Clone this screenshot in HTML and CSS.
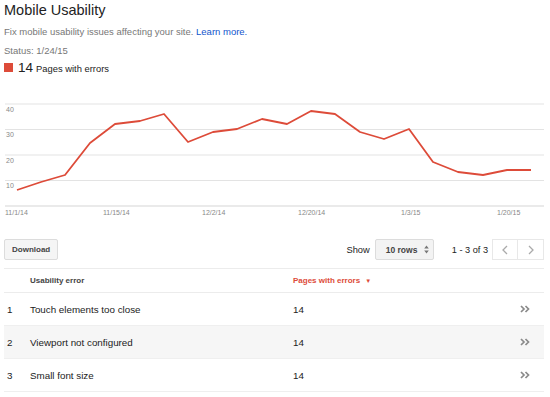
FILE: index.html
```html
<!DOCTYPE html>
<html lang="en">
<head>
<meta charset="UTF-8">
<title>Mobile Usability</title>
<link rel="stylesheet" href="styles.css">
</head>
<body>
    <div class="page">
        <h1 class="title">Mobile Usability</h1>
        <p class="desc">Fix mobile usability issues affecting your site. <a href="#">Learn more.</a></p>
        <p class="status">Status: 1/24/15</p>

        <div class="summary">
            <span class="swatch"></span>
            <span class="count">14</span>
            <span class="count-label">Pages with errors</span>
        </div>

        <!-- chart uses page coordinates through the viewBox -->
        <svg class="chart" width="541" height="122" viewBox="4 96 541 122">
            <g stroke="#e3e3e3" stroke-width="1.2">
                <line x1="5" y1="103" x2="544" y2="103"/>
                <line x1="5" y1="128.5" x2="544" y2="128.5"/>
                <line x1="5" y1="154" x2="544" y2="154"/>
                <line x1="5" y1="179.5" x2="544" y2="179.5"/>
            </g>
            <line x1="5" y1="205" x2="544" y2="205" stroke="#d6d6d6" stroke-width="1.2"/>
            <g class="axis">
                <text x="6" y="111">40</text>
                <text x="6" y="136">30</text>
                <text x="6" y="162">20</text>
                <text x="6" y="187">10</text>
                <text x="5" y="214">11/1/14</text>
                <text x="103" y="214">11/15/14</text>
                <text x="202" y="214">12/2/14</text>
                <text x="298" y="214">12/20/14</text>
                <text x="401" y="214">1/3/15</text>
                <text x="497" y="214">1/20/15</text>
            </g>
            <polyline fill="none" stroke="#dd4b39" stroke-width="1.8" stroke-linejoin="round"
                points="17,189 41,181 65,174 90,142 115,123 140,120 164,113 188,141 213,131 237,128 262,118 287,123 311,110 335,113 360,131 384,138 409,128 433,161 458,171 483,174 507,169 531,169"/>
        </svg>

        <div class="toolbar">
            <button type="button" class="btn">Download</button>
            <div class="pager">
                <span class="show">Show</span>
                <div class="select">
                    <span>10 rows</span>
                    <svg width="5" height="9" viewBox="0 0 5 9"><path d="M2.5 0.5 L4.8 3.5 H0.2 Z M2.5 8.5 L4.8 5.5 H0.2 Z" fill="#777"/></svg>
                </div>
                <span class="range">1 - 3 of 3</span>
                <div class="nav">
                    <button type="button" class="nav-btn"><svg width="6" height="10" viewBox="0 0 6 10"><polyline points="5,1 1,5 5,9" fill="none" stroke="#aaa" stroke-width="1.3"/></svg></button>
                    <button type="button" class="nav-btn"><svg width="6" height="10" viewBox="0 0 6 10"><polyline points="1,1 5,5 1,9" fill="none" stroke="#aaa" stroke-width="1.3"/></svg></button>
                </div>
            </div>
        </div>

        <table class="errors">
            <thead>
                <tr>
                    <th class="num"></th>
                    <th class="name">Usability error</th>
                    <th class="value sorted">Pages with errors <span class="arrow">&#9660;</span></th>
                    <th class="go"></th>
                </tr>
            </thead>
            <tbody>
                <tr>
                    <td class="num">1</td>
                    <td class="name">Touch elements too close</td>
                    <td class="value">14</td>
                    <td class="go"><svg width="10" height="8" viewBox="0 0 10 8"><path d="M1 1 L4 4 L1 7 M5.5 1 L8.5 4 L5.5 7" fill="none" stroke="#8a8a8a" stroke-width="1.7"/></svg></td>
                </tr>
                <tr class="alt">
                    <td class="num">2</td>
                    <td class="name">Viewport not configured</td>
                    <td class="value">14</td>
                    <td class="go"><svg width="10" height="8" viewBox="0 0 10 8"><path d="M1 1 L4 4 L1 7 M5.5 1 L8.5 4 L5.5 7" fill="none" stroke="#8a8a8a" stroke-width="1.7"/></svg></td>
                </tr>
                <tr>
                    <td class="num">3</td>
                    <td class="name">Small font size</td>
                    <td class="value">14</td>
                    <td class="go"><svg width="10" height="8" viewBox="0 0 10 8"><path d="M1 1 L4 4 L1 7 M5.5 1 L8.5 4 L5.5 7" fill="none" stroke="#8a8a8a" stroke-width="1.7"/></svg></td>
                </tr>
            </tbody>
        </table>
    </div>
</body>
</html>
```

FILE: styles.css
```css
body {
    font-family: "Liberation Sans", Arial, sans-serif;
    background-color: #fff;
    color: #222;
    margin: 0;
    padding: 0;
}

.page {
    padding: 0 6px 0 4px;
}

.title {
    margin: 0;
    padding-top: 2px;
    font-size: 14.5px;
    line-height: 17px;
    font-weight: normal;
    color: #222;
}

.desc,
.status {
    margin: 7px 0 0;
    font-size: 9.5px;
    line-height: 12px;
    color: #777;
}

.desc a {
    color: #1155cc;
    text-decoration: none;
}

.summary {
    display: flex;
    align-items: baseline;
    margin-top: 3px;
    line-height: 16px;
}

.swatch {
    display: inline-block;
    width: 9px;
    height: 9px;
    background-color: #dd4b39;
    margin-right: 5px;
}

.count {
    font-size: 13.5px;
    color: #222;
    margin-right: 3px;
}

.count-label {
    font-size: 9.4px;
    color: #222;
}

.chart {
    display: block;
    margin-top: 20px;
}

.axis text {
    font-family: "Liberation Sans", Arial, sans-serif;
    font-size: 7px;
    fill: #888;
}

.toolbar {
    display: flex;
    justify-content: space-between;
    align-items: center;
    margin-top: 20px;
    height: 21px;
}

.btn {
    font-family: inherit;
    font-size: 8px;
    font-weight: bold;
    color: #444;
    background-color: #f5f5f5;
    border: 1px solid #dcdcdc;
    border-radius: 2px;
    height: 21px;
    padding: 0 7px;
    cursor: pointer;
}

.pager {
    display: flex;
    align-items: center;
}

.show {
    font-size: 9.3px;
    color: #222;
    margin-right: 5px;
}

.select {
    display: flex;
    align-items: center;
    justify-content: space-between;
    box-sizing: border-box;
    width: 59px;
    height: 21px;
    padding: 0 4px 0 10px;
    background-color: #f3f3f3;
    border: 1px solid #dcdcdc;
    border-radius: 2px;
    font-size: 8.5px;
    font-weight: bold;
    color: #444;
}

.range {
    font-size: 9.2px;
    color: #222;
    margin: 0 4px 0 18px;
}

.nav {
    display: flex;
}

.nav-btn {
    display: flex;
    align-items: center;
    justify-content: center;
    width: 26px;
    height: 21px;
    padding: 0;
    background-color: #fff;
    border: 1px solid #e8e8e8;
    cursor: pointer;
}

.nav-btn + .nav-btn {
    border-left: none;
}

.errors {
    width: 100%;
    margin-top: 8px;
    border-collapse: collapse;
}

.errors th {
    height: 23px;
    padding: 0;
    text-align: left;
    font-size: 8px;
    font-weight: bold;
    color: #444;
    border-top: 1px solid #ececec;
    border-bottom: 1px solid #ececec;
}

.errors th.sorted {
    color: #dd4b39;
}

.arrow {
    font-size: 6px;
    margin-left: 3px;
}

.errors td {
    height: 32px;
    padding: 0;
    font-size: 9.8px;
    color: #222;
    border-bottom: 1px solid #efefef;
}

.errors tr.alt td {
    background-color: #f6f6f6;
}

.num {
    width: 26px;
    padding-left: 3px !important;
    box-sizing: border-box;
}

.name {
    width: 263px;
}

.go {
    width: 24px;
}

.go svg {
    display: block;
}
```
